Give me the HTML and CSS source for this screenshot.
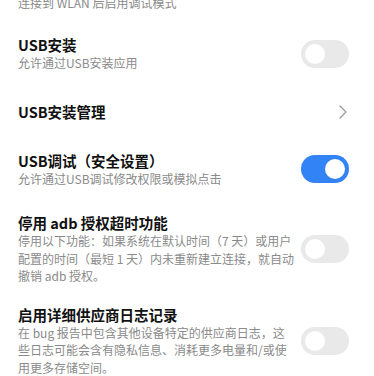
FILE: index.html
```html
<!DOCTYPE html>
<html lang="zh-CN">
<head>
<meta charset="utf-8">
<link rel="stylesheet" href="styles.css">
</head>
<body>
<div class="list">
  <div class="top-note">连接到 WLAN 后启用调试模式</div>

  <div class="item item-usb-install">
    <div class="text">
      <div class="title">USB安装</div>
      <div class="desc">允许通过USB安装应用</div>
    </div>
    <div class="switch"><span class="knob"></span></div>
  </div>

  <div class="item item-nav">
    <div class="text">
      <div class="title">USB安装管理</div>
    </div>
    <svg class="chevron" width="10" height="16" viewBox="0 0 10 16"><path d="M2 2 L8 8 L2 14" fill="none" stroke="#9a9a9a" stroke-width="1.3" stroke-linecap="round" stroke-linejoin="round"/></svg>
  </div>

  <div class="item item-debug">
    <div class="text">
      <div class="title">USB调试（安全设置）</div>
      <div class="desc">允许通过USB调试修改权限或模拟点击</div>
    </div>
    <div class="switch on"><span class="knob"></span></div>
  </div>

  <div class="item item-adb">
    <div class="text">
      <div class="title">停用 adb 授权超时功能</div>
      <div class="desc">停用以下功能：如果系统在默认时间（7 天）或用户配置的时间（最短 1 天）内未重新建立连接，就自动撤销 adb 授权。</div>
    </div>
    <div class="switch"><span class="knob"></span></div>
  </div>

  <div class="item item-vendor">
    <div class="text">
      <div class="title">启用详细供应商日志记录</div>
      <div class="desc">在 bug 报告中包含其他设备特定的供应商日志，这些日志可能会含有隐私信息、消耗更多电量和/或使用更多存储空间。</div>
    </div>
    <div class="switch"><span class="knob"></span></div>
  </div>
</div>
</body>
</html>
```

FILE: styles.css
```css
html, body {
  margin: 0;
  padding: 0;
  background: #ffffff;
}
body {
  font-family: "Noto Sans CJK SC", "Noto Sans", sans-serif;
  color: #1a1a1a;
  overflow: hidden;
}
.list {
  display: flex;
  flex-direction: column;
  padding: 0 25px 0 18px;
}
.top-note {
  font-size: 12px;
  line-height: 17px;
  color: #8a8a8a;
  margin-top: -6px;
  margin-bottom: 25px;
}
.item {
  display: flex;
  align-items: center;
  justify-content: space-between;
  padding: 0;
}
.item-usb-install { padding-bottom: 31px; }
.item-nav { padding-bottom: 31px; }
.item-debug { padding-bottom: 27px; }
.item-adb { padding-bottom: 21px; }
.text {
  display: flex;
  flex-direction: column;
  width: 278px;
}
.title {
  font-size: 14.5px;
  line-height: 18px;
  font-weight: 700;
  color: #111111;
}
.desc {
  font-size: 12px;
  line-height: 17.5px;
  color: #8a8a8a;
}
.switch {
  position: relative;
  width: 48px;
  height: 28px;
  border-radius: 14px;
  background: #e9e9e9;
  flex-shrink: 0;
}
.switch .knob {
  position: absolute;
  top: 4px;
  left: 4px;
  width: 20px;
  height: 20px;
  border-radius: 50%;
  background: #ffffff;
}
.switch.on {
  background: #3283f6;
}
.switch.on .knob {
  left: 24px;
}
.chevron {
  margin-right: 1px;
}
```
